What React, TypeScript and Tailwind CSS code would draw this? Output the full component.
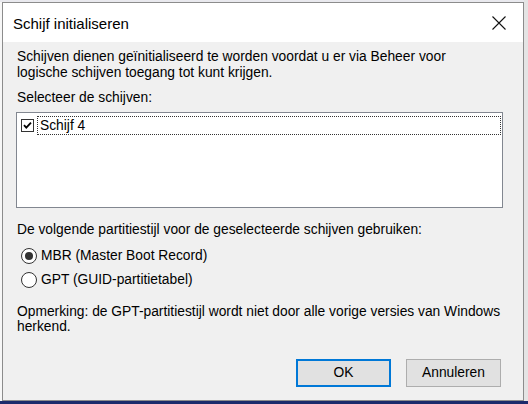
import React from "react";

export default function App() {
  return (
    <div className="relative w-[528px] h-[404px] overflow-hidden bg-[#f7f7f7] font-['Liberation_Sans',Arial,sans-serif] text-black">
      {/* background window fragments */}
      <div className="absolute left-0 top-0 w-[528px] h-[2px] bg-[#e9e9ee]" />
      <div className="absolute left-0 top-[401px] w-[528px] h-[3px] bg-[#1b2a6b]" />
      <div className="absolute left-[524px] top-0 w-[4px] h-[401px] bg-[#e4e4e4]" />

      {/* dialog */}
      <div className="absolute left-[2px] top-[2px] w-[522px] h-[399px] border border-[#8c8c8c] bg-[#f0f0f0] flex flex-col">
        {/* title bar */}
        <div className="h-[39px] bg-white flex items-center justify-between shrink-0">
          <div className="pl-[10px] text-[15px] leading-none pt-[1px]">
            Schijf initialiseren
          </div>
          <div className="w-[46px] h-[39px] flex items-center justify-center mr-[1px]">
            <svg width="14" height="14" viewBox="0 0 14 14">
              <path d="M0.5 0.5 L13.5 13.5 M13.5 0.5 L0.5 13.5" stroke="#111" strokeWidth="1.1" />
            </svg>
          </div>
        </div>

        {/* body */}
        <div className="flex flex-col pl-[14px] pr-[20px] text-[13.8px]">
          <p className="mt-[7px] leading-[16px]">
            Schijven dienen geïnitialiseerd te worden voordat u er via Beheer voor
            <br />
            logische schijven toegang tot kunt krijgen.
          </p>
          <p className="mt-[9px] leading-[16px]">Selecteer de schijven:</p>

          <div className="mt-[6px] -ml-[1px] w-[487px] h-[96px] border border-[#828790] bg-white">
            <div className="flex items-center h-[19px] mt-[3px]">
              <div className="ml-[4px] w-[13px] h-[13px] border border-[#333] bg-white flex items-center justify-center">
                <svg width="9" height="9" viewBox="0 0 9 9">
                  <path d="M1 4.2 L3.3 6.6 L8 1.6" stroke="#000" strokeWidth="1.8" fill="none" />
                </svg>
              </div>
              <div className="ml-[3px] flex-1 h-[19px] mr-[1px] border border-dotted border-[#333] flex items-center pl-[2px] leading-none">
                Schijf 4
              </div>
            </div>
          </div>

          <p className="mt-[14px] leading-[16px]">
            De volgende partitiestijl voor de geselecteerde schijven gebruiken:
          </p>

          <div className="mt-[8px] flex flex-col gap-[4px]">
            <div className="flex items-center h-[20px]">
              <div className="ml-[4px] w-[16px] h-[16px] rounded-full border border-[#333] bg-white flex items-center justify-center">
                <div className="w-[8px] h-[8px] rounded-full bg-[#333]" />
              </div>
              <span className="ml-[4px]">MBR (Master Boot Record)</span>
            </div>
            <div className="flex items-center h-[20px]">
              <div className="ml-[4px] w-[16px] h-[16px] rounded-full border border-[#333] bg-white" />
              <span className="ml-[4px]">GPT (GUID-partitietabel)</span>
            </div>
          </div>

          <p className="mt-[14px] leading-[15px]">
            Opmerking: de GPT-partitiestijl wordt niet door alle vorige versies van Windows
            <br />
            herkend.
          </p>

          <div className="mt-[25px] flex justify-end gap-[15px] pr-[2px]">
            <button className="w-[95px] h-[28px] border-2 border-[#0078d7] bg-[#e1e1e1] leading-none">
              OK
            </button>
            <button className="w-[95px] h-[28px] border border-[#adadad] bg-[#e1e1e1] leading-none">
              Annuleren
            </button>
          </div>
        </div>
      </div>
    </div>
  );
}
